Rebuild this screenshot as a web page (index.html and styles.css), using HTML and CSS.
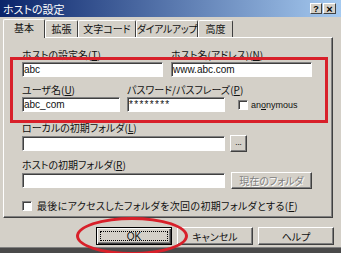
FILE: index.html
```html
<!DOCTYPE html>
<html lang="ja">
<head>
  <meta charset="UTF-8">
  <title>ホストの設定</title>
  <link rel="stylesheet" href="styles.css">
</head>
<body>
  <div class="window">
    <div class="titlebar">
      <span class="title">ホストの設定</span>
      <div class="title-buttons">
        <span class="tbtn">?</span>
        <span class="tbtn close">×</span>
      </div>
    </div>

    <div class="tabs">
      <div class="tab tab-basic active">基本</div>
      <div class="tab tab-ext">拡張</div>
      <div class="tab tab-code">文字コード</div>
      <div class="tab tab-dial">ダイアルアップ</div>
      <div class="tab tab-adv">高度</div>
    </div>

    <div class="panel">
      <div class="row row-host">
        <div class="group wide">
          <label>ホストの設定名(<u>T</u>)</label>
          <div class="field">abc</div>
        </div>
        <div class="group wide">
          <label>ホスト名(アドレス)(<u>N</u>)</label>
          <div class="field">www.abc.com</div>
        </div>
      </div>

      <div class="row row-user">
        <div class="group narrow">
          <label>ユーザ名(<u>U</u>)</label>
          <div class="field">abc_com</div>
        </div>
        <div class="group narrow">
          <label>パスワード/パスフレーズ(<u>P</u>)</label>
          <div class="field secret">********</div>
        </div>
        <div class="check anon"><span class="box"></span><span>an<u>o</u>nymous</span></div>
      </div>

      <div class="group folder-local">
        <label>ローカルの初期フォルダ(<u>L</u>)</label>
        <div class="field-row">
          <div class="field long"></div>
          <div class="btn small">...</div>
        </div>
      </div>

      <div class="group folder-host">
        <label>ホストの初期フォルダ(<u>R</u>)</label>
        <div class="field-row">
          <div class="field long"></div>
          <div class="btn current disabled">現在のフォルダ</div>
        </div>
      </div>

      <div class="check last-folder"><span class="box"></span><span>最後にアクセスしたフォルダを次回の初期フォルダとする(<u>F</u>)</span></div>
    </div>

    <div class="buttons">
      <div class="btn action default"><span class="focus">OK</span></div>
      <div class="btn action">キャンセル</div>
      <div class="btn action">ヘルプ</div>
    </div>

    <div class="frame-bottom"></div>

    <div class="mark mark-rect"></div>
    <div class="mark mark-oval"></div>
  </div>
</body>
</html>
```

FILE: styles.css
```css
* {
  margin: 0;
  padding: 0;
  box-sizing: border-box;
}

body {
  width: 341px;
  height: 253px;
  overflow: hidden;
  background: #d4d0c8;
  font-family: "Noto Sans CJK JP", "Liberation Sans", sans-serif;
  font-feature-settings: "palt";
  font-size: 10px;
  color: #111;
}

.window {
  position: relative;
  width: 341px;
  height: 253px;
  display: flex;
  flex-direction: column;
}

/* title bar */
.titlebar {
  height: 17px;
  display: flex;
  align-items: center;
  justify-content: space-between;
  padding: 0 5px 0 3px;
  background: linear-gradient(90deg, #0a246a, #a6caf0);
  color: #fff;
  font-size: 11px;
}

.title-buttons {
  display: flex;
  gap: 1px;
}

.tbtn {
  width: 12px;
  height: 11px;
  display: flex;
  align-items: center;
  justify-content: center;
  background: #d4d0c8;
  border: 1px solid;
  border-color: #fff #404040 #404040 #fff;
  color: #000;
  font: bold 9px "Liberation Sans", sans-serif;
}

.tbtn.close {
  width: 13px;
  font-size: 11px;
}

/* tabs */
.tabs {
  height: 20px;
  display: flex;
  align-items: flex-end;
  padding-left: 3px;
}

.tab {
  height: 17px;
  line-height: 15px;
  text-align: center;
  white-space: nowrap;
  border-top: 1px solid #fff;
  border-left: 1px solid #fff;
  border-right: 1px solid #404040;
  border-radius: 2px 2px 0 0;
}

.tab-basic { width: 42px; }
.tab-ext { width: 33px; }
.tab-code { width: 58px; }
.tab-dial { width: 62px; letter-spacing: -0.4px; }
.tab-adv { width: 35px; }

.tab.active {
  position: relative;
  z-index: 1;
  height: 19px;
  margin-bottom: -1px;
  line-height: 16px;
  background: #d4d0c8;
}

/* page */
.panel {
  width: 330px;
  height: 181px;
  margin-left: 3px;
  padding: 10px 0 0 18px;
  border: 1px solid;
  border-color: #fff #404040 #404040 #fff;
  box-shadow: inset -1px -1px #808080;
}

.row {
  display: flex;
}

.row-host {
  gap: 8px;
}

.row-user {
  gap: 7px;
  align-items: flex-end;
  margin-top: 6px;
}

.group {
  display: flex;
  flex-direction: column;
  gap: 1px;
}

.group label {
  display: block;
  height: 13px;
  line-height: 13px;
  white-space: nowrap;
}

.wide { width: 141px; }
.narrow { width: 98px; }

.field {
  height: 15px;
  padding-left: 1px;
  background: #fff;
  border: 1px solid;
  border-color: #808080 #fff #fff #808080;
  box-shadow: inset 1px 1px #404040;
  font: 10px/13px "Liberation Sans", sans-serif;
  white-space: nowrap;
  overflow: hidden;
}

.field.secret {
  letter-spacing: 1.3px;
}

.field.long {
  width: 203px;
}

.field-row {
  display: flex;
  align-items: center;
  gap: 5px;
}

.folder-local { margin-top: 9px; }
.folder-host { margin-top: 6px; }

.check {
  display: flex;
  align-items: center;
  gap: 5px;
  white-space: nowrap;
}

.box {
  width: 10px;
  height: 10px;
  background: #fff;
  border: 1px solid;
  border-color: #808080 #fff #fff #808080;
  box-shadow: inset 1px 1px #404040;
}

.anon {
  margin: 0 0 2px 6px;
  font: 9px "Liberation Sans", sans-serif;
  gap: 3px;
}

.last-folder {
  margin-top: 9px;
  letter-spacing: 0.35px;
}

/* buttons */
.btn {
  display: flex;
  align-items: center;
  justify-content: center;
  background: #d4d0c8;
  border: 1px solid;
  border-color: #fff #404040 #404040 #fff;
  box-shadow: inset -1px -1px #808080;
  white-space: nowrap;
}

.btn.small {
  width: 17px;
  height: 17px;
  font-size: 8px;
  line-height: 8px;
  padding-bottom: 3px;
}

.btn.current {
  width: 81px;
  height: 17px;
  margin-left: 1px;
}

.btn.disabled {
  color: #808080;
  text-shadow: 1px 1px #fff;
}

.buttons {
  display: flex;
  justify-content: flex-end;
  gap: 5px;
  margin-top: 9px;
  padding-right: 7px;
}

.btn.action {
  width: 76px;
  height: 18px;
}

.btn.default {
  border-color: #000;
  box-shadow: inset 1px 1px #fff, inset -1px -1px #404040, inset -2px -2px #808080;
  padding: 3px;
}

.focus {
  width: 100%;
  height: 100%;
  display: flex;
  align-items: center;
  justify-content: center;
  border: 1px dotted #000;
  font: 10px "Liberation Sans", sans-serif;
}

.frame-bottom {
  height: 6px;
  margin-top: auto;
  background: #4a4a4a;
  border-top: 1px solid #808080;
}

/* red annotations drawn over the dialog */
.mark {
  position: absolute;
  border: 3px solid #d8202a;
  pointer-events: none;
}

.mark-rect {
  left: 10px;
  top: 57px;
  width: 318px;
  height: 66px;
}

.mark-oval {
  left: 76px;
  top: 217px;
  width: 112px;
  height: 38px;
  border-radius: 50%;
}
```
